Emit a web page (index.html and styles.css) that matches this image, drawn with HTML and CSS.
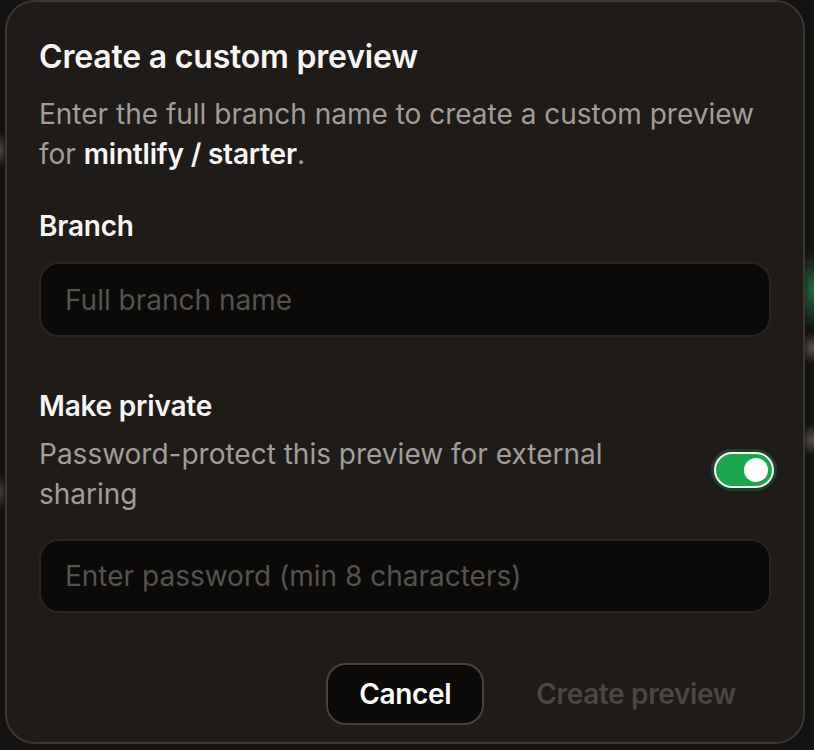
FILE: index.html
```html
<!DOCTYPE html>
<html lang="en">
<head>
<meta charset="utf-8">
<title>Create a custom preview</title>
<link rel="stylesheet" href="styles.css">
</head>
<body>
<div class="modal">
  <h2 class="title">Create a custom preview</h2>
  <p class="desc">Enter the full branch name to create a custom preview for <strong>mintlify / starter</strong>.</p>

  <label class="label label-branch">Branch</label>
  <div class="input input-branch"><span class="placeholder">Full branch name</span></div>

  <div class="label label-private">Make private</div>
  <div class="private-row">
    <p class="private-desc">Password-protect this preview for external sharing</p>
    <div class="toggle"><span class="knob"></span></div>
  </div>
  <div class="input input-password"><span class="placeholder">Enter password (min 8 characters)</span></div>

  <div class="footer">
    <button class="btn btn-cancel">Cancel</button>
    <button class="btn btn-create">Create preview</button>
  </div>
</div>
</body>
</html>
```

FILE: styles.css
```css
html, body {
  margin: 0;
  padding: 0;
  height: 100%;
}
body {
  width: 814px;
  height: 750px;
  overflow: hidden;
  font-family: Inter, "Noto Sans", sans-serif;
  background-color: #131211;
  background-image:
    radial-gradient(ellipse 14px 40px at 812px 290px, rgba(40, 130, 75, 0.75), rgba(40,130,75,0) 100%),
    radial-gradient(ellipse 12px 16px at 812px 348px, rgba(110, 105, 100, 0.7), rgba(110,105,100,0) 100%),
    radial-gradient(ellipse 12px 16px at 812px 440px, rgba(110, 105, 100, 0.7), rgba(110,105,100,0) 100%),
    radial-gradient(ellipse 8px 18px at 0px 150px, rgba(110, 105, 100, 0.6), rgba(110,105,100,0) 100%),
    radial-gradient(ellipse 8px 18px at 0px 492px, rgba(110, 105, 100, 0.5), rgba(110,105,100,0) 100%);
  padding-left: 5px;
  box-sizing: border-box;
}
.modal {
  box-sizing: border-box;
  width: 800px;
  height: 744px;
  background: #1e1b19;
  border: 2px solid #393634;
  border-radius: 30px;
  padding: 35px 32px 0 33px;
  color: #fff;
}
.title {
  margin: 0;
  margin-left: -1px;
  font-size: 32px;
  line-height: 40px;
  font-weight: 600;
  letter-spacing: -0.2px;
  color: #f7f6f5;
}
.desc {
  margin: 17px 0 0 -1px;
  font-size: 28px;
  line-height: 40px;
  color: #a19d99;
}
.desc strong {
  color: #f7f6f5;
  font-weight: 600;
  letter-spacing: -0.2px;
}
.label {
  display: block;
  margin-left: -1px;
  font-size: 28px;
  line-height: 40px;
  font-weight: 600;
  letter-spacing: -0.2px;
  color: #f7f6f5;
}
.label-branch { margin-top: 32px; }
.label-private { margin-top: 49px; }
.input {
  box-sizing: border-box;
  height: 75px;
  margin-left: -1px;
  background: #0b0a09;
  border: 2px solid #272523;
  border-radius: 20px;
  display: flex;
  align-items: center;
  padding-left: 24px;
}
.input-branch { margin-top: 16px; }
.input-password { margin-top: 25px; height: 74px; }
.placeholder {
  font-size: 28px;
  color: #56524e;
}
.private-row {
  margin-top: 8px;
  margin-left: -1px;
  display: flex;
  justify-content: space-between;
  align-items: center;
}
.private-desc {
  margin: 0;
  max-width: 620px;
  font-size: 28px;
  line-height: 40px;
  color: #a19d99;
}
.toggle {
  box-sizing: border-box;
  width: 60px;
  height: 36px;
  border-radius: 18px;
  background: #1aa64c;
  border: 2px solid #f4f4f4;
  box-shadow: 0 0 0 3px #1f3f2b;
  display: flex;
  align-items: center;
  justify-content: flex-end;
  padding-right: 4px;
  margin-right: -3px;
  margin-top: -8px;
}
.knob {
  width: 24px;
  height: 24px;
  border-radius: 50%;
  background: #fff;
}
.footer {
  margin-top: 50px;
  display: flex;
  justify-content: flex-end;
  gap: 17px;
}
.btn {
  box-sizing: border-box;
  height: 62px;
  font-family: Inter, "Noto Sans", sans-serif;
  font-size: 28px;
  font-weight: 600;
  letter-spacing: -0.35px;
  border-radius: 20px;
  padding: 0 33px;
  cursor: pointer;
}
.btn-cancel {
  padding: 0 31px;
  background: #0b0a09;
  border: 2px solid #46423f;
  color: #fff;
}
.btn-create {
  background: transparent;
  border: 2px solid transparent;
  color: #4a4643;
}
```
